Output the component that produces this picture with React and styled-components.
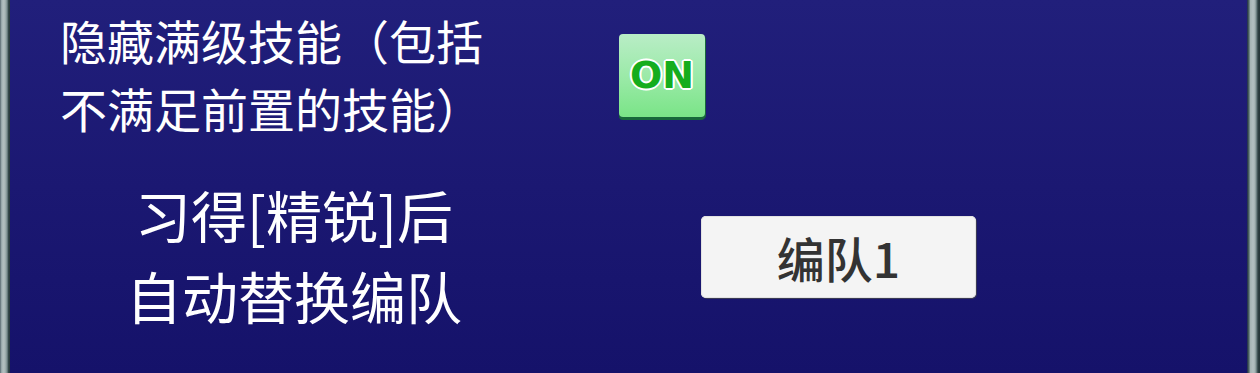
import React from "react";
import styled, { createGlobalStyle } from "styled-components";

const Global = createGlobalStyle`
  html, body { margin: 0; padding: 0; background: #15126a; }
  body { width: 1260px; height: 373px; overflow: hidden; }
  #root { width: 1260px; height: 373px; }
`;

const Frame = styled.div`
  display: flex;
  width: 1260px;
  height: 373px;
`;

const Rail = styled.div`
  flex: 0 0 ${(p) => p.$w}px;
  background: ${(p) => p.$bg};
`;

const Panel = styled.div`
  flex: 1;
  display: flex;
  flex-direction: column;
  gap: 31px;
  padding: 6px 0 0 50px;
  background: linear-gradient(180deg, #211f7b 0%, #1b1872 50%, #15126a 100%);
  font-family: "Noto Sans CJK SC", "Noto Sans", sans-serif;
  color: #ffffff;
`;

const Row = styled.div`
  display: flex;
  align-items: center;
`;

const Label = styled.div`
  flex: 0 0 ${(p) => p.$width}px;
  font-size: ${(p) => p.$size}px;
  line-height: ${(p) => p.$lh}px;
  text-align: ${(p) => p.$align};
  white-space: nowrap;
`;

const Toggle = styled.div`
  width: 86px;
  height: 83px;
  margin-left: ${(p) => p.$offset}px;
  margin-top: 2px;
  border-radius: 4px;
  background: linear-gradient(180deg, #b9edc6 0%, #9ceaa9 50%, #7ae487 100%);
  box-shadow: 0 3px 0 #17683a, 1px 2px 0 #17683a;
  display: flex;
  align-items: center;
  justify-content: center;
  font-family: "DejaVu Sans", sans-serif;
  font-weight: bold;
  font-size: 38px;
  color: #15ad1d;
  text-shadow: 2px 0 0 #fff, -2px 0 0 #fff, 0 2px 0 #fff, 0 -2px 0 #fff,
    1.4px 1.4px 0 #fff, -1.4px -1.4px 0 #fff, 1.4px -1.4px 0 #fff, -1.4px 1.4px 0 #fff;
`;

const TeamButton = styled.div`
  width: 275px;
  height: 82px;
  margin-left: ${(p) => p.$offset}px;
  margin-top: 5px;
  box-sizing: border-box;
  border-radius: 5px;
  background: #f4f4f4;
  box-shadow: 1px 1px 0 #3a3a55, inset 0 0 0 1px #e2e2e2;
  display: flex;
  align-items: center;
  justify-content: center;
  font-size: 48px;
  font-weight: 500;
  color: #333333;
`;

export default function App() {
  return (
    <>
      <Global />
      <Frame>
        <Rail
          $w={10}
          $bg="linear-gradient(90deg, #4b5a62 0px, #8d9ea2 1px, #b3c0c1 3px, #a9b7b7 5px, #7b8f90 7px, #34484a 8.5px, #243436 10px)"
        />
        <Panel>
          <Row>
            <Label $width={559} $size={47} $lh={68} $align="left">
              隐藏满级技能（包括
              <br />
              不满足前置的技能）
            </Label>
            <Toggle $offset={0}>ON</Toggle>
          </Row>
          <Row>
            <Label $width={468} $size={56} $lh={81} $align="center">
              习得[精锐]后
              <br />
              自动替换编队
            </Label>
            <TeamButton $offset={173}>编队1</TeamButton>
          </Row>
        </Panel>
        <Rail
          $w={13}
          $bg="linear-gradient(90deg, #1e2a55 0px, #34484a 1px, #6f8485 2.5px, #a6b4b4 3.5px, #b3c0c1 6px, #a4b2b2 8px, #6b7f80 9.5px, #2e4042 11px, #243436 13px)"
        />
      </Frame>
    </>
  );
}
